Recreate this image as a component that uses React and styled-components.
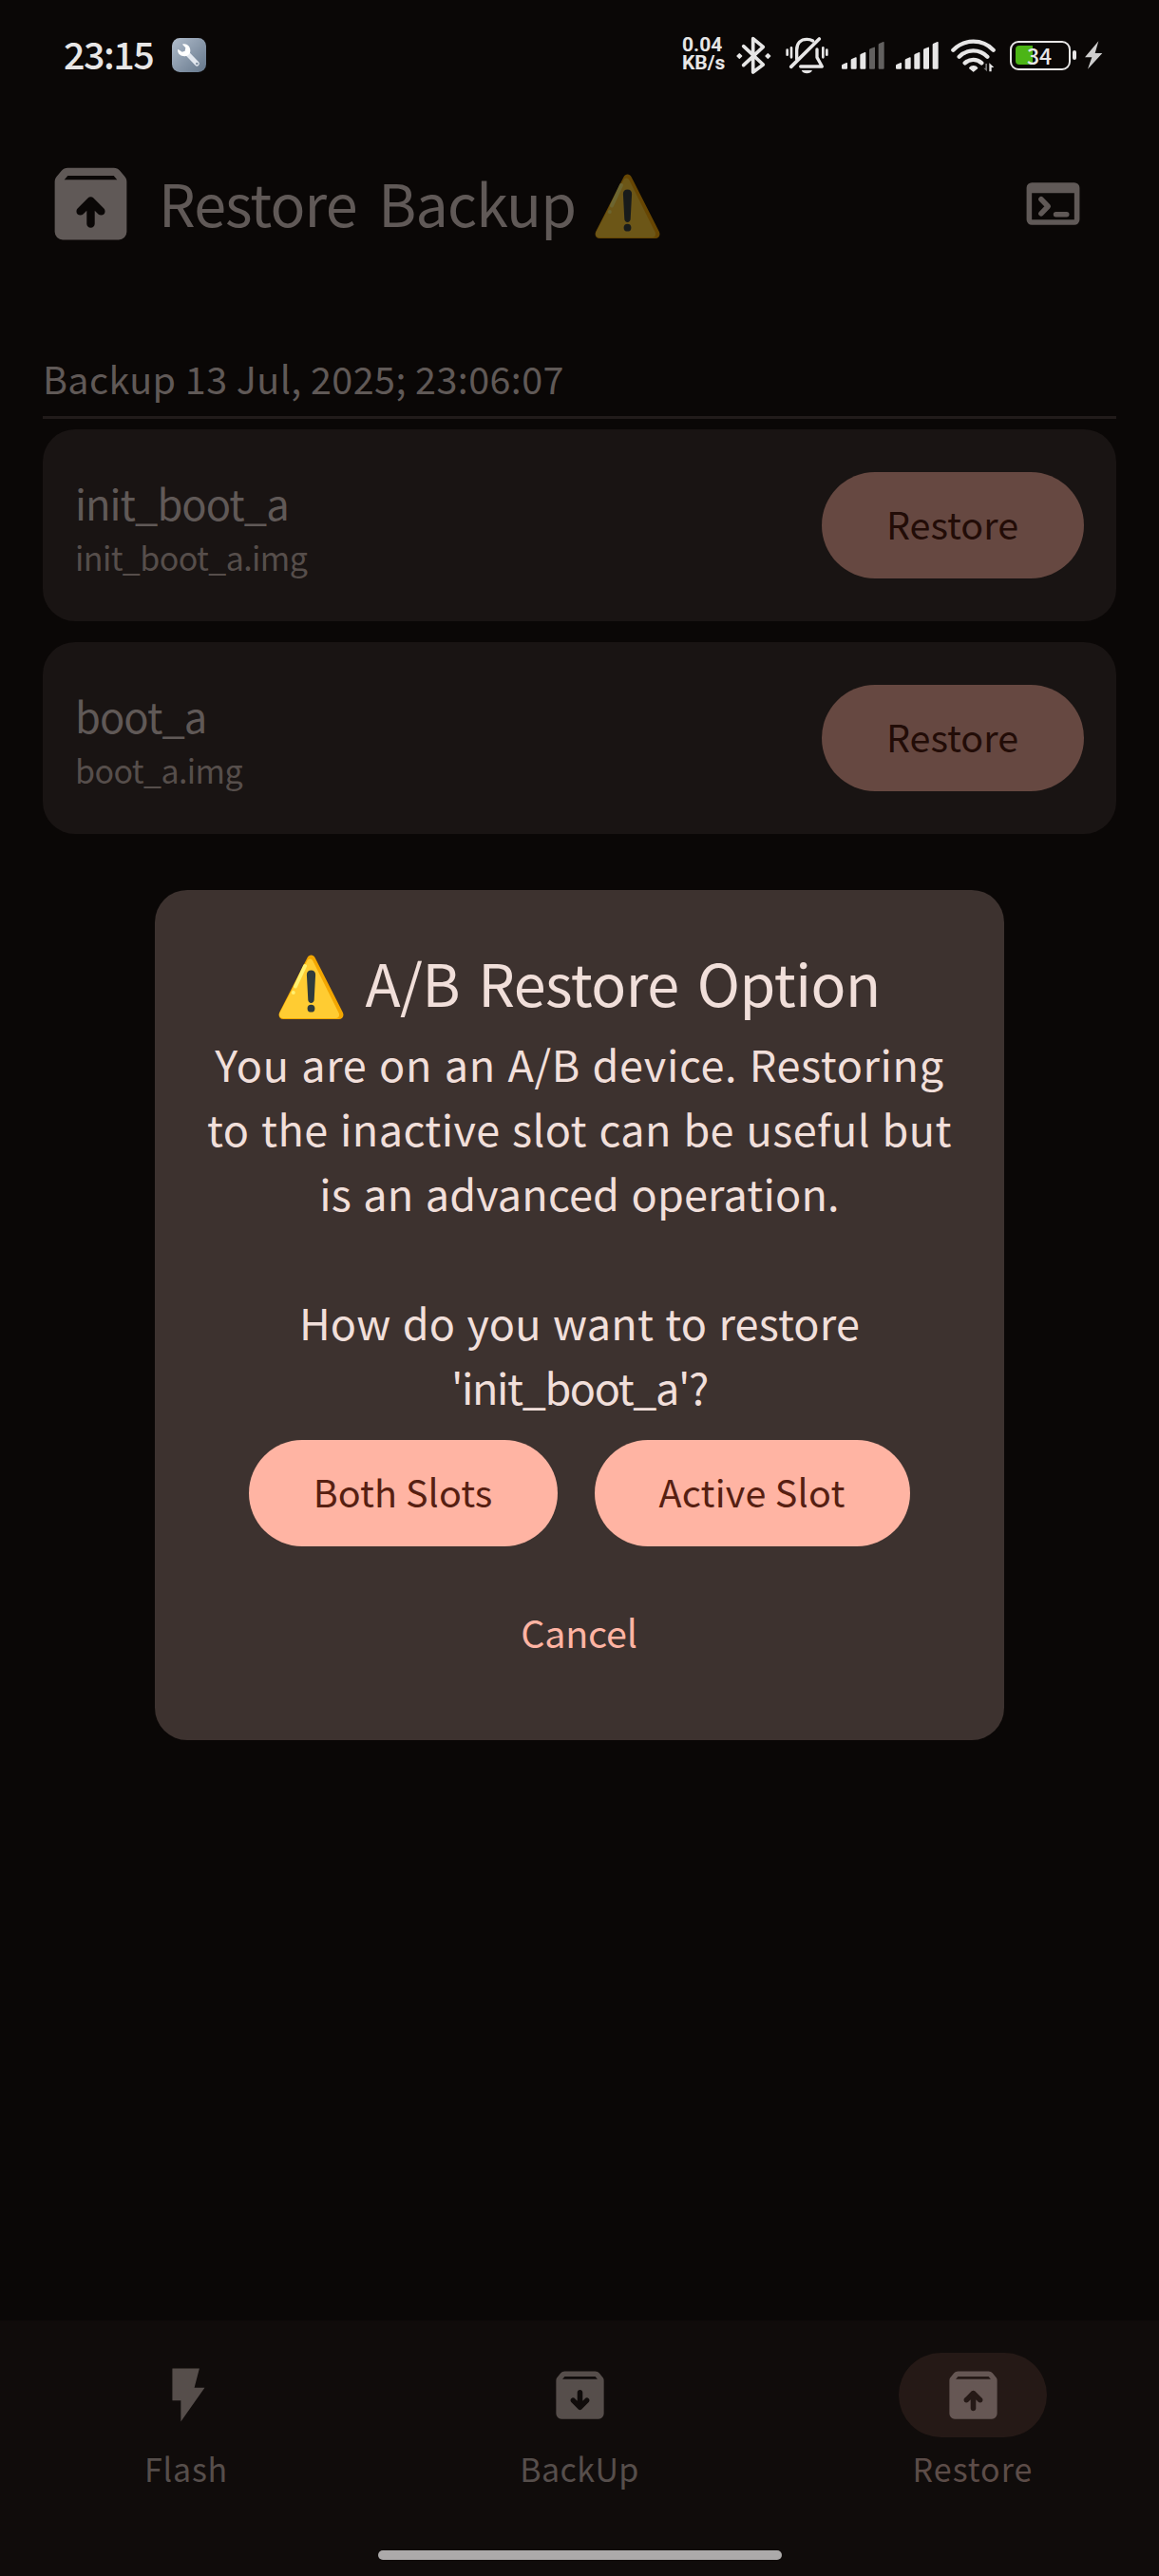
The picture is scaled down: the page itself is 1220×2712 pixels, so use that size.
import React from "react";
import styled, { createGlobalStyle } from "styled-components";

const c = {
  background: "#0a0706",
  card: "#191413",
  nav: "#100c0b",
  divider: "#211b1a",
  text: "#605957",
  textMuted: "#564e4b",
  buttonDim: "#664841",
  onButtonDim: "#220c07",
  pill: "#251916",
  pillIcon: "#665754",
  pillLabel: "#5c4c48",
  dialog: "#3d322f",
  dialogText: "#f1dfda",
  primary: "#ffb4a3",
  onPrimary: "#561f12",
  status: "#e7e6e6",
};

const GlobalStyle = createGlobalStyle`
  *, *::before, *::after { box-sizing: border-box; }
  body { margin: 0; background: ${c.background}; }
  svg { display: block; flex: none; }
`;

const Screen = styled.div`
  position: relative;
  display: flex;
  flex-direction: column;
  width: 1220px;
  height: 2712px;
  overflow: hidden;
  background: ${c.background};
  color: ${c.text};
  font-family: "Noto Sans CJK SC", "Noto Sans", sans-serif;
  white-space: nowrap;
`;

/* ---------- status bar ---------- */

const StatusBar = styled.div`
  display: flex;
  align-items: center;
  justify-content: space-between;
  height: 96px;
  padding: 20px 59px 0 67px;
  color: ${c.status};
`;

const StatusGroup = styled.div`
  display: flex;
  align-items: center;
  gap: ${(p) => p.$gap || 0}px;
`;

const Clock = styled.span`
  width: 95px;
  padding-bottom: 5px;
  font-size: 39.5px;
  font-weight: 500;
  line-height: 40px;
  letter-spacing: -1.5px;
`;

const Speed = styled.div`
  display: flex;
  flex-direction: column;
  width: 48px;
  padding-bottom: 2px;
  font-family: Roboto, sans-serif;
  font-size: 21px;
  font-weight: 700;
  line-height: 19.5px;
`;

const BatteryBody = styled.div`
  position: relative;
  display: flex;
  align-items: center;
  justify-content: center;
  width: 64px;
  height: 31px;
  border: 2.5px solid ${c.status};
  border-radius: 9px;
  font-size: 23px;
  font-weight: 500;
  line-height: 24px;
`;

const BatteryLevel = styled.div`
  position: absolute;
  left: 4px;
  top: 3px;
  width: 18px;
  height: 20px;
  border-radius: 4px 0 0 4px;
  background: #4cb516;
`;

const BatteryText = styled.span`
  position: relative;
  padding: 0 2px 1px 0;
`;

const BatteryTip = styled.div`
  width: 4px;
  height: 10px;
  margin-left: 2px;
  border-radius: 2px;
  background: ${c.status};
`;

const Spacer = styled.div`
  flex: none;
  width: ${(p) => p.$w}px;
`;

/* ---------- page ---------- */

const Header = styled.header`
  display: flex;
  align-items: center;
  height: 237px;
  padding: 0 78px 0 45px;
`;

const PageTitle = styled.h1`
  flex: 1;
  display: flex;
  align-items: center;
  gap: 20px;
  margin: 0 0 0 21px;
  font-size: 61px;
  font-weight: 400;
  line-height: 90px;
`;

const TitleText = styled.span`
  padding-bottom: ${(p) => p.$lift || 0}px;
  letter-spacing: ${(p) => p.$track || 0}px;
  word-spacing: ${(p) => p.$space || 0}px;
`;

const TitleEmoji = styled.span`
  display: block;
  padding-top: ${(p) => p.$drop}px;
  opacity: ${(p) => (p.$dim ? 0.4 : 1)};
`;

const Content = styled.main`
  flex: 1;
  display: flex;
  flex-direction: column;
  padding: 36px 45px 0;
`;

const SectionTitle = styled.h2`
  margin: 0;
  height: 69px;
  font-size: 39.5px;
  font-weight: 400;
  line-height: 57px;
  letter-spacing: 0.42px;
`;

const Divider = styled.div`
  height: 3px;
  margin-bottom: 11px;
  background: ${c.divider};
`;

const Card = styled.section`
  display: flex;
  align-items: center;
  justify-content: space-between;
  height: 202px;
  margin-bottom: 22px;
  padding: 0 34px;
  border-radius: 34px;
  background: ${c.card};
`;

const CardText = styled.div`
  padding-bottom: 2px;
`;

const PartitionName = styled.div`
  font-size: 43.5px;
  line-height: 68px;
  letter-spacing: -0.95px;
`;

const FileName = styled.div`
  color: ${c.textMuted};
  font-size: 34px;
  line-height: 45px;
  letter-spacing: -0.6px;
`;

const Button = styled.button`
  width: ${(p) => p.$w}px;
  height: 112px;
  padding: 0 1px ${(p) => (p.$text ? 1 : 4)}px 0;
  border: 0;
  border-radius: 56px;
  background: ${(p) => (p.$text ? "transparent" : p.$dim ? c.buttonDim : c.primary)};
  color: ${(p) => (p.$text ? c.primary : p.$dim ? c.onButtonDim : c.onPrimary)};
  font-family: inherit;
  font-size: 39.5px;
  font-weight: 400;
  line-height: 56px;
  letter-spacing: ${(p) => p.$track || 0}px;
`;

/* ---------- navigation ---------- */

const NavBar = styled.nav`
  display: flex;
  flex-direction: column;
  align-items: center;
  height: 269px;
  padding-top: 34px;
  background: ${c.nav};
`;

const NavItems = styled.div`
  display: flex;
  gap: 22px;
  width: 100%;
`;

const NavItem = styled.div`
  flex: 1;
  display: flex;
  flex-direction: column;
  align-items: center;
  color: ${(p) => (p.$active ? c.pillLabel : c.textMuted)};
  font-size: 34px;
  line-height: 45px;
  letter-spacing: ${(p) => p.$track || 0}px;
`;

const NavPill = styled.div`
  display: flex;
  align-items: center;
  justify-content: center;
  width: 156px;
  height: 89px;
  margin-bottom: 10px;
  border-radius: 45px;
  background: ${(p) => (p.$active ? c.pill : "transparent")};
  color: ${(p) => (p.$active ? c.pillIcon : c.textMuted)};
`;

const GestureHandle = styled.div`
  width: 425px;
  height: 10px;
  margin-top: 64px;
  border-radius: 5px;
  background: #acaaaa;
`;

/* ---------- dialog ---------- */

const Overlay = styled.div`
  position: absolute;
  inset: 0;
  display: flex;
  align-items: center;
  justify-content: center;
  padding-top: 57px;
`;

const Dialog = styled.div`
  display: flex;
  flex-direction: column;
  align-items: center;
  width: 894px;
  height: 895px;
  padding-top: 52px;
  border-radius: 34px;
  background: ${c.dialog};
  color: ${c.dialogText};
`;

const DialogTitle = styled.h2`
  display: flex;
  align-items: center;
  gap: 22px;
  height: 90px;
  margin: 0 0 7px;
  font-size: 61px;
  font-weight: 400;
  line-height: 90px;
`;

const DialogBody = styled.p`
  margin: 0 0 22px;
  font-size: 45px;
  line-height: 68px;
  word-spacing: 2px;
  text-align: center;
`;

const Line = styled.span`
  display: block;
  height: 68px;
  letter-spacing: ${(p) => p.$track || 0}px;
`;

const Actions = styled.div`
  display: flex;
  gap: 39px;
  margin-bottom: 34px;
`;

/* ---------- icons ---------- */

const boxShape =
  "M5 21q-.825 0-1.4125-.5875T3 19V6.525q0-.35.1125-.675T3.45 5.25L4.7 3.725q.275-.35.6875-.5375T6.25 3h11.5q.45 0 .8625.1875t.6875.5375L20.55 5.25q.225.275.3375.6T21 6.525V19q0 .825-.5875 1.4125T19 21zM5.4 6h13.2l-.85-1H6.25z";
const arrowUp =
  "M11 13.7V17q0 .425.288.712T12 18t.713-.288T13 17v-3.3l.9.9q.275.275.7.275t.7-.275.275-.7-.275-.7l-2.6-2.6q-.3-.3-.7-.3t-.7.3l-2.6 2.6q-.275.275-.275.7t.275.7.7.275.7-.275z";
const arrowDown =
  "M12 10q-.425 0-.713.288T11 11v3.2l-.9-.9q-.275-.275-.7-.275t-.7.275-.275.7.275.7l2.6 2.6q.3.3.7.3t.7-.3l2.6-2.6q.275-.275.275-.7t-.275-.7-.7-.275-.7.275l-.9.9V11q0-.425-.288-.713T12 10z";

const ArchiveIcon = ({ size = 67, up }) => (
  <svg width={size} height={size} viewBox="0 0 24 24" fill="currentColor">
    <path fillRule="evenodd" d={boxShape + (up ? arrowUp : arrowDown)} />
  </svg>
);

const FlashIcon = () => (
  <svg width="67" height="67" viewBox="0 0 24 24" fill="currentColor">
    <path d="M6.6 2h10.2l-1.9 7.2h3.9L9.8 22v-7.9H6.6z" />
  </svg>
);

const TerminalIcon = () => (
  <svg width="67" height="67" viewBox="0 0 24 24" fill="none">
    <path
      fill="currentColor"
      fillRule="evenodd"
      d="M4 4h16a2 2 0 0 1 2 2v12a2 2 0 0 1-2 2H4a2 2 0 0 1-2-2V6a2 2 0 0 1 2-2zm0 4v10h16V8z"
    />
    <path
      d="M7.5 10.3 10.1 13l-2.6 2.7M13.1 16h4"
      stroke="currentColor"
      strokeWidth="2"
      strokeLinecap="round"
      strokeLinejoin="round"
    />
  </svg>
);

const WarningIcon = () => (
  <svg width="69" height="69" viewBox="0 0 69 69">
    <path d="M30.5 3.2c1.8-3.7 6.3-3.7 8.1 0l29.2 57.6c1.8 3.7-.2 7.2-4 7.2H5.2c-3.8 0-5.8-3.5-4-7.2z" fill="#f2a600" />
    <path d="M30.3 6.5c1.3-2.7 4.7-2.7 6 0l27.2 54.8c1.4 2.9-.1 5.7-3 5.7H5c-3.2 0-4.9-2.9-3.5-5.7z" fill="#ffcc32" />
    <path d="M28 12 18 33.5" stroke="#fff170" strokeWidth="4" strokeLinecap="round" />
    <circle cx="15.8" cy="40" r="2" fill="#fff170" />
    <path
      d="M34.5 16.5c2.8 0 4.7 1.9 4.6 4.7l-1.4 26.5c-.1 2-1.5 3.2-3.2 3.2s-3.1-1.2-3.2-3.2l-1.4-26.5c-.1-2.8 1.8-4.7 4.6-4.7z"
      fill="#2f3b3c"
    />
    <circle cx="34.5" cy="56.7" r="3.9" fill="#2f3b3c" />
  </svg>
);

const ToolsAppIcon = () => (
  <svg width="36" height="36" viewBox="0 0 108 108">
    <defs>
      <linearGradient id="tools" x1="0" y1="0" x2="1" y2="1">
        <stop offset="0" stopColor="#b0bccb" />
        <stop offset="1" stopColor="#64768a" />
      </linearGradient>
    </defs>
    <rect width="108" height="108" rx="25" fill="url(#tools)" />
    <path d="M48 49 79 81" stroke="#e3e8ef" strokeWidth="15" strokeLinecap="round" />
    <path d="M33 20c13-4 25 6 25 20 0 13-11 20-22 17-13-2-20-12-17-22l13 9 9-3 2-10z" fill="#fff" />
    <circle cx="79" cy="81" r="4" fill="#8291a3" />
  </svg>
);

const BluetoothIcon = () => (
  <svg width="37" height="41" viewBox="0 0 111 123" fill="none" stroke="currentColor" strokeWidth="11" strokeLinejoin="round" strokeLinecap="round">
    <path d="M23 32 85 90 53 114V8l32 26L23 92" />
    <path d="M10 56l7 7-7 7-7-7zM100 56l7 7-7 7-7-7z" fill="currentColor" strokeWidth="4" />
  </svg>
);

const MutedBellIcon = () => (
  <svg width="45" height="40" viewBox="0 0 135 120" fill="none" stroke="currentColor" strokeWidth="10" strokeLinecap="round" strokeLinejoin="round">
    <path d="M17 97 106 9" strokeWidth="11" />
    <path d="M35 73V44C35 22 48 10 67 10c8 0 14 2 19 5" />
    <path d="M99 42v25l16 29H47" />
    <path d="M5 44v15M18 37v30M118 37v30M130 44v15" strokeWidth="8" />
    <path d="M50 108h34c-5 13-29 13-34 0z" fill="currentColor" stroke="none" />
  </svg>
);

const barTops = [69, 52, 36, 20, 3];

const SignalIcon = ({ level }) => (
  <svg width="45" height="30" viewBox="0 0 135 90" fill="currentColor">
    {barTops.map((top, i) => (
      <path
        key={top}
        opacity={i < level ? 1 : 0.4}
        d={`M${i * 29} ${top + 9}q0-3 3-4l12-5q3-1 3 2V86q0 3-3 3H${i * 29 + 3}q-3 0-3-3z`}
      />
    ))}
  </svg>
);

const WifiIcon = () => (
  <svg width="47" height="35" viewBox="0 0 141 105" fill="none" stroke="currentColor" strokeWidth="13" strokeLinecap="round">
    <path d="M7 35C43 -1 99 -1 134 35M26 56C51 31 90 31 115 56M44 76C59 62 82 62 97 76" />
    <path d="M59 92c5-8 19-8 24 0L71 102z" fill="currentColor" strokeWidth="4" strokeLinejoin="round" />
    <path d="M114 78v25l-11-11h6V78z" fill="#777" stroke="none" />
    <path d="M121 103V76l15 14h-8v13z" fill="currentColor" stroke="none" />
  </svg>
);

const ChargeIcon = () => (
  <svg width="20" height="30" viewBox="0 0 58 90" fill="#cfcece">
    <path d="M45 1 2 52h22L11 89l46-50H34z" />
  </svg>
);

/* ---------- screen ---------- */

const backups = [
  { name: "init_boot_a", file: "init_boot_a.img" },
  { name: "boot_a", file: "boot_a.img" },
];

export default function App() {
  return (
    <Screen>
      <GlobalStyle />
      <StatusBar>
        <StatusGroup $gap={19}>
          <Clock>23:15</Clock>
          <ToolsAppIcon />
        </StatusGroup>
        <StatusGroup>
          <Speed>
            <span>0.04</span>
            <span>KB/s</span>
          </Speed>
          <Spacer $w={9} />
          <BluetoothIcon />
          <Spacer $w={15} />
          <MutedBellIcon />
          <Spacer $w={14} />
          <SignalIcon level={3} />
          <Spacer $w={12} />
          <SignalIcon level={5} />
          <Spacer $w={13} />
          <WifiIcon />
          <Spacer $w={15} />
          <BatteryBody>
            <BatteryLevel />
            <BatteryText>34</BatteryText>
          </BatteryBody>
          <BatteryTip />
          <Spacer $w={8} />
          <ChargeIcon />
        </StatusGroup>
      </StatusBar>

      <Header>
        <ArchiveIcon size={101} up />
        <PageTitle>
          <TitleText $lift={4} $track={-0.9} $space={10}>
            Restore Backup
          </TitleText>
          <TitleEmoji $dim $drop={5}>
            <WarningIcon />
          </TitleEmoji>
        </PageTitle>
        <TerminalIcon />
      </Header>

      <Content>
        <SectionTitle>Backup 13 Jul, 2025; 23:06:07</SectionTitle>
        <Divider />
        {backups.map((b) => (
          <Card key={b.name}>
            <CardText>
              <PartitionName>{b.name}</PartitionName>
              <FileName>{b.file}</FileName>
            </CardText>
            <Button $dim $w={276}>
              Restore
            </Button>
          </Card>
        ))}
      </Content>

      <NavBar>
        <NavItems>
          <NavItem $track={0.8}>
            <NavPill>
              <FlashIcon />
            </NavPill>
            Flash
          </NavItem>
          <NavItem $track={0.4}>
            <NavPill>
              <ArchiveIcon />
            </NavPill>
            BackUp
          </NavItem>
          <NavItem $active $track={1}>
            <NavPill $active>
              <ArchiveIcon up />
            </NavPill>
            Restore
          </NavItem>
        </NavItems>
        <GestureHandle />
      </NavBar>

      <Overlay>
        <Dialog>
          <DialogTitle>
            <TitleEmoji $drop={10}>
              <WarningIcon />
            </TitleEmoji>
            <TitleText $track={-0.5} $space={6}>
              A/B Restore Option
            </TitleText>
          </DialogTitle>
          <DialogBody>
            <Line $track={0.62}>You are on an A/B device. Restoring</Line>
            <Line $track={0.42}>to the inactive slot can be useful but</Line>
            <Line $track={0.17}>is an advanced operation.</Line>
            <Line />
            <Line $track={0.17}>How do you want to restore</Line>
            <Line $track={-1.4}>'init_boot_a'?</Line>
          </DialogBody>
          <Actions>
            <Button $w={325} $track={0.1}>
              Both Slots
            </Button>
            <Button $w={332} $track={0.25}>
              Active Slot
            </Button>
          </Actions>
          <Button $text $w={220} $track={-0.2}>
            Cancel
          </Button>
        </Dialog>
      </Overlay>
    </Screen>
  );
}
